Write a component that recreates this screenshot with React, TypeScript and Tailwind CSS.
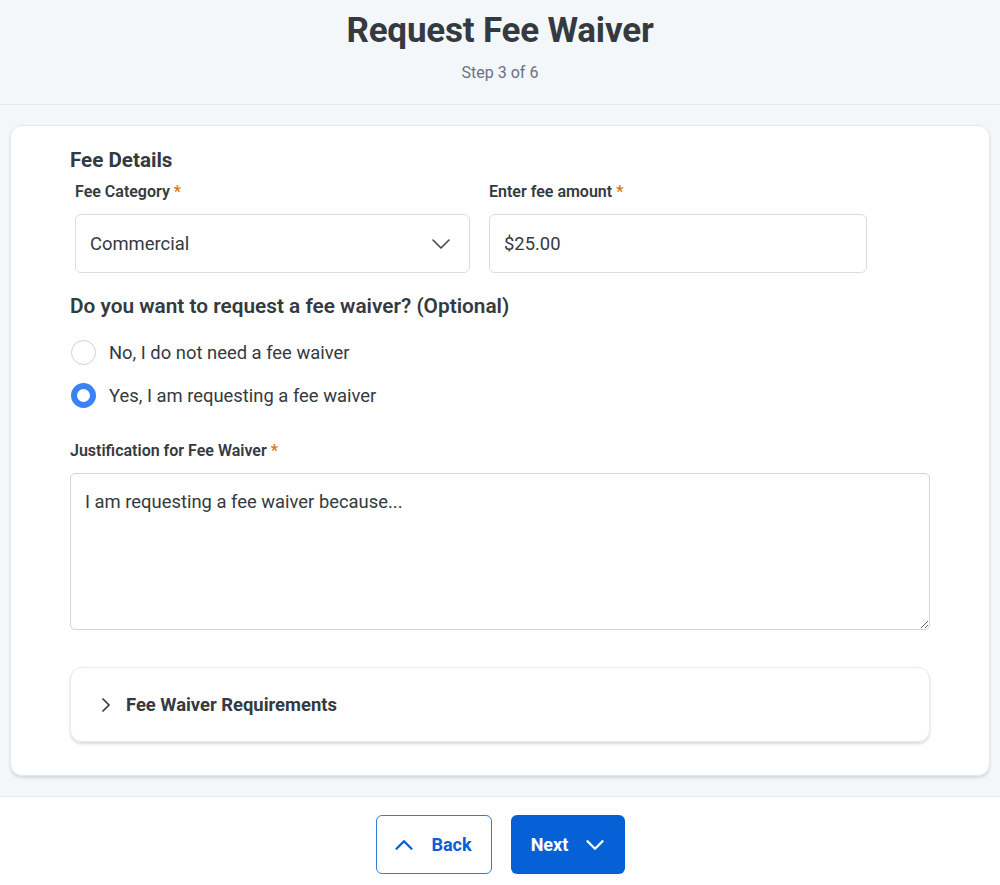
import { ChevronDown, ChevronRight, ChevronUp } from 'lucide-react'

const Req = () => <span className="text-[#d97706]"> *</span>

export default function App() {
	return (
		<div className="min-h-screen bg-[#f3f7fa] text-[#343a40] font-['Roboto',sans-serif]">
			{/* Header */}
			<div className="h-[105px] border-b border-[#e3e9ef] flex flex-col items-center pt-[10px]">
				<h1 className="text-[35px] leading-[42px] font-bold tracking-[-0.2px]">Request Fee Waiver</h1>
				<p className="mt-[11px] text-[16px] leading-[20px] text-[#6b7280]">Step 3 of 6</p>
			</div>

			{/* Card */}
			<div className="px-[10px] pt-[20px] pb-[20px]">
				<div className="bg-white rounded-[12px] border border-[#e3e9ef] shadow-[0_2px_3px_rgba(0,0,0,0.12)] px-[59px] pt-[20px] pb-[32px] h-[651px]">
					<h2 className="text-[20.6px] leading-[28px] font-bold">Fee Details</h2>
					<div className="flex gap-[19px] mt-[7px] pl-[5px]">
						<div className="w-[395px]">
							<label className="block text-[16px] leading-[22px] font-semibold">
								Fee Category<Req />
							</label>
							<div className="mt-[11px] h-[59px] border border-[#d9dde3] rounded-[6px] flex items-center justify-between pl-[14px] pr-[12px]">
								<span className="text-[18.4px]">Commercial</span>
								<ChevronDown className="w-[32px] h-[32px] text-[#3f4650]" strokeWidth={1.2} />
							</div>
						</div>
						<div className="w-[378px]">
							<label className="block text-[16px] leading-[22px] font-semibold">
								Enter fee amount<Req />
							</label>
							<div className="mt-[11px] h-[59px] border border-[#d9dde3] rounded-[6px] flex items-center px-[14px]">
								<span className="text-[18.4px]">$25.00</span>
							</div>
						</div>
					</div>

					<h3 className="mt-[19px] text-[20.8px] leading-[28px] font-semibold">
						Do you want to request a fee waiver? (Optional)
					</h3>
					<div className="mt-[20px] flex flex-col gap-[18px] pl-[1px]">
						<div className="flex items-center gap-[13px]">
							<span className="w-[25px] h-[25px] rounded-full border border-[#c5d3e6] bg-white" />
							<span className="text-[18.4px] leading-[25px]">No, I do not need a fee waiver</span>
						</div>
						<div className="flex items-center gap-[13px]">
							<span className="w-[25px] h-[25px] rounded-full border-[6px] border-[#3b82f6] bg-white" />
							<span className="text-[18.4px] leading-[25px]">Yes, I am requesting a fee waiver</span>
						</div>
					</div>

					<label className="block mt-[32px] text-[16px] leading-[22px] font-semibold">
						Justification for Fee Waiver<Req />
					</label>
					<textarea
						className="mt-[11px] block w-full h-[157px] border border-[#cfd4da] rounded-[5px] px-[14px] py-[16px] text-[18.4px] leading-[24px] text-[#343a40] outline-none"
						defaultValue="I am requesting a fee waiver because..."
					/>

					<div className="mt-[37px] h-[75px] border border-[#e6ebf0] rounded-[12px] shadow-[0_2px_3px_rgba(0,0,0,0.15)] flex items-center pl-[23px]">
						<ChevronRight className="w-[24px] h-[24px] text-[#343a40]" strokeWidth={1.75} />
						<span className="ml-[8px] text-[18.4px] font-bold">Fee Waiver Requirements</span>
					</div>
				</div>
			</div>

			{/* Footer */}
			<div className="bg-white border-t border-[#e3e9ef] flex justify-center gap-[19px] pt-[18px] pb-[12px]">
				<button className="h-[59px] w-[116px] border border-[#2f7fd8] rounded-[6px] flex items-center justify-center gap-[12px] text-[#0b5fd3] text-[18px] font-bold bg-white">
					<ChevronUp className="w-[30px] h-[30px] -ml-[6px]" strokeWidth={1.9} />
					Back
				</button>
				<button className="h-[59px] w-[114px] rounded-[6px] flex items-center justify-center gap-[12px] text-white text-[18px] font-bold bg-[#0761d6]">
					Next
					<ChevronDown className="w-[30px] h-[30px] -mr-[6px]" strokeWidth={1.9} />
				</button>
			</div>
		</div>
	)
}
